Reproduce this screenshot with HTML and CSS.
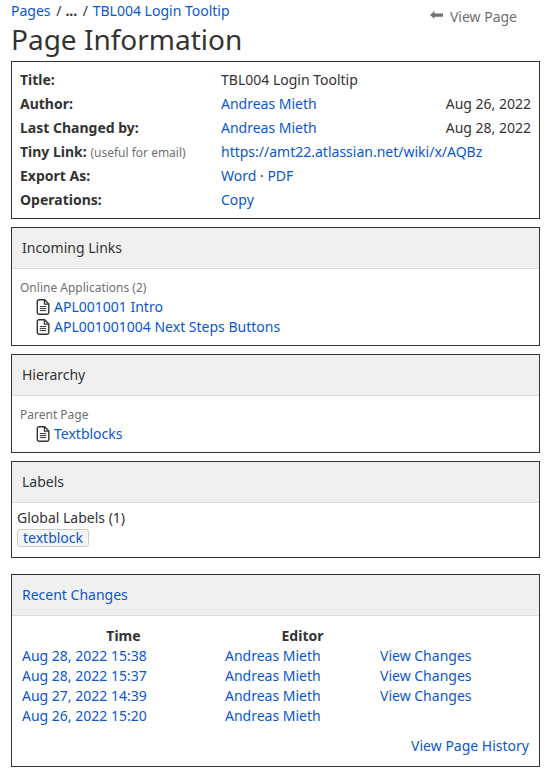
FILE: index.html
```html
<!DOCTYPE html>
<html lang="en">
<head>
    <meta charset="UTF-8">
    <meta name="viewport" content="width=device-width, initial-scale=1.0">
    <title>Page Information</title>
    <link rel="stylesheet" href="styles.css">
</head>
<body>
    <svg class="sprite" width="0" height="0">
        <symbol id="page" viewBox="0 0 14 16">
            <path d="M3 .7h5.6L12.8 5v8.6a1.7 1.7 0 0 1-1.7 1.7H3a1.7 1.7 0 0 1-1.7-1.7V2.4A1.7 1.7 0 0 1 3 .7z" fill="#fff" stroke="#333" stroke-width="1.4"/>
            <path d="M8.4 1v4.2h4.2" fill="none" stroke="#333" stroke-width="1.2"/>
            <path d="M3.8 7.6h6.4M3.8 9.6h6.4M3.8 11.6h6.4" stroke="#333" stroke-width="1"/>
        </symbol>
    </svg>

    <div class="page-head">
        <div class="head-text">
            <div class="breadcrumbs">
                <a href="#">Pages</a>
                <span class="sep">/</span><b class="dots">...</b>
                <span class="sep">/</span>
                <a href="#">TBL004 Login Tooltip</a>
            </div>
            <h1>Page Information</h1>
        </div>
        <a class="view-page" href="#">
            <svg class="back-icon" width="13" height="10" viewBox="0 0 13 10"><path d="M0 4 4.5 0v2.4H13v3.4H4.5V8z" fill="#707070"/></svg>
            View Page
        </a>
    </div>

    <!-- Basic info -->
    <div class="box info">
        <div class="info-row">
            <div class="info-label">Title:</div>
            <div class="info-value">TBL004 Login Tooltip</div>
        </div>
        <div class="info-row">
            <div class="info-label">Author:</div>
            <div class="info-value"><a href="#">Andreas Mieth</a></div>
            <div class="info-date">Aug 26, 2022</div>
        </div>
        <div class="info-row">
            <div class="info-label">Last Changed by:</div>
            <div class="info-value"><a href="#">Andreas Mieth</a></div>
            <div class="info-date">Aug 28, 2022</div>
        </div>
        <div class="info-row">
            <div class="info-label">Tiny Link: <small>(useful for email)</small></div>
            <div class="info-value"><a href="#">https://amt22.atlassian.net/wiki/x/AQBz</a></div>
        </div>
        <div class="info-row">
            <div class="info-label">Export As:</div>
            <div class="info-value"><a href="#">Word</a> · <a href="#">PDF</a></div>
        </div>
        <div class="info-row">
            <div class="info-label">Operations:</div>
            <div class="info-value"><a href="#">Copy</a></div>
        </div>
    </div>

    <!-- Incoming Links -->
    <div class="box">
        <div class="box-head">Incoming Links</div>
        <div class="box-body">
            <div class="group-name">Online Applications (2)</div>
            <div class="page-link"><svg class="page-icon"><use href="#page"/></svg><a href="#">APL001001 Intro</a></div>
            <div class="page-link"><svg class="page-icon"><use href="#page"/></svg><a href="#">APL001001004 Next Steps Buttons</a></div>
        </div>
    </div>

    <!-- Hierarchy -->
    <div class="box">
        <div class="box-head">Hierarchy</div>
        <div class="box-body">
            <div class="group-name">Parent Page</div>
            <div class="page-link"><svg class="page-icon"><use href="#page"/></svg><a href="#">Textblocks</a></div>
        </div>
    </div>

    <!-- Labels -->
    <div class="box">
        <div class="box-head">Labels</div>
        <div class="labels-body">
            <div>Global Labels (1)</div>
            <a class="label" href="#">textblock</a>
        </div>
    </div>

    <!-- Recent Changes -->
    <div class="box recent">
        <div class="box-head"><a href="#">Recent Changes</a></div>
        <div class="recent-body">
            <div class="recent-grid">
                <div class="col-title">Time</div>
                <div class="col-title">Editor</div>
                <div></div>
                <a href="#">Aug 28, 2022 15:38</a>
                <a href="#">Andreas Mieth</a>
                <a href="#">View Changes</a>
                <a href="#">Aug 28, 2022 15:37</a>
                <a href="#">Andreas Mieth</a>
                <a href="#">View Changes</a>
                <a href="#">Aug 27, 2022 14:39</a>
                <a href="#">Andreas Mieth</a>
                <a href="#">View Changes</a>
                <a href="#">Aug 26, 2022 15:20</a>
                <a href="#">Andreas Mieth</a>
                <div></div>
            </div>
            <div class="history"><a href="#">View Page History</a></div>
        </div>
    </div>
</body>
</html>
```

FILE: styles.css
```css
body {
    font-family: "Noto Sans", sans-serif;
    font-size: 14px;
    line-height: 20px;
    color: #333;
    margin: 0;
    padding: 0 15px 0 11px;
    background: #fff;
}

a {
    color: #0b57d0;
    text-decoration: none;
}

.sprite {
    position: absolute;
}

/* Header */
.page-head {
    display: flex;
    justify-content: space-between;
    height: 61px;
}

.breadcrumbs {
    height: 22px;
    line-height: 22px;
}

.sep {
    margin: 0 1px 0 2px;
    color: #333;
}

.dots {
    margin: 0 0 0 3px;
}

h1 {
    font-size: 28px;
    font-weight: 400;
    line-height: 34px;
    margin: 0;
    color: #333;
}

.view-page {
    color: #707070;
    margin: 7px 23px 0 0;
    display: flex;
    align-items: center;
    align-self: flex-start;
    gap: 7px;
}

.back-icon {
    margin-top: -3px;
}

/* Boxes */
.box {
    border: 1px solid #333;
    margin-bottom: 8px;
}

.info {
    padding: 6px 8px;
}

.info-row {
    display: flex;
    height: 24px;
    line-height: 24px;
}

.info-label {
    width: 201px;
    font-weight: 700;
}

.info-label small {
    font-size: 12px;
    font-weight: 400;
    color: #707070;
}

.info-value {
    flex: 1;
}

.info-date {
    text-align: right;
}

.box-head {
    background: #f0f0f0;
    border-bottom: 1px solid #ddd;
    height: 40px;
    line-height: 40px;
    padding-left: 10px;
}

.box-body {
    padding: 8px;
}

.group-name {
    font-size: 12px;
    color: #707070;
    height: 20px;
    line-height: 22px;
}

.page-link {
    display: flex;
    align-items: center;
    padding-left: 16px;
    height: 20px;
}

.page-icon {
    width: 14px;
    height: 16px;
    margin-right: 4px;
}

.labels-body {
    padding: 5px 5px 10px 5px;
}

.label {
    display: block;
    width: fit-content;
    height: 16px;
    line-height: 16px;
    margin-top: 1px;
    padding: 0 5px;
    background: #f5f5f5;
    border: 1px solid #ccc;
    border-radius: 3px;
}

.recent {
    margin-top: 16px;
}

.recent-body {
    padding: 10px 10px 0 10px;
    height: 140px;
}

.recent-grid {
    display: grid;
    grid-template-columns: 203px 155px 1fr;
    grid-auto-rows: 20px;
}

.col-title {
    font-weight: 700;
    text-align: center;
}

.history {
    text-align: right;
    margin-top: 10px;
}
```
